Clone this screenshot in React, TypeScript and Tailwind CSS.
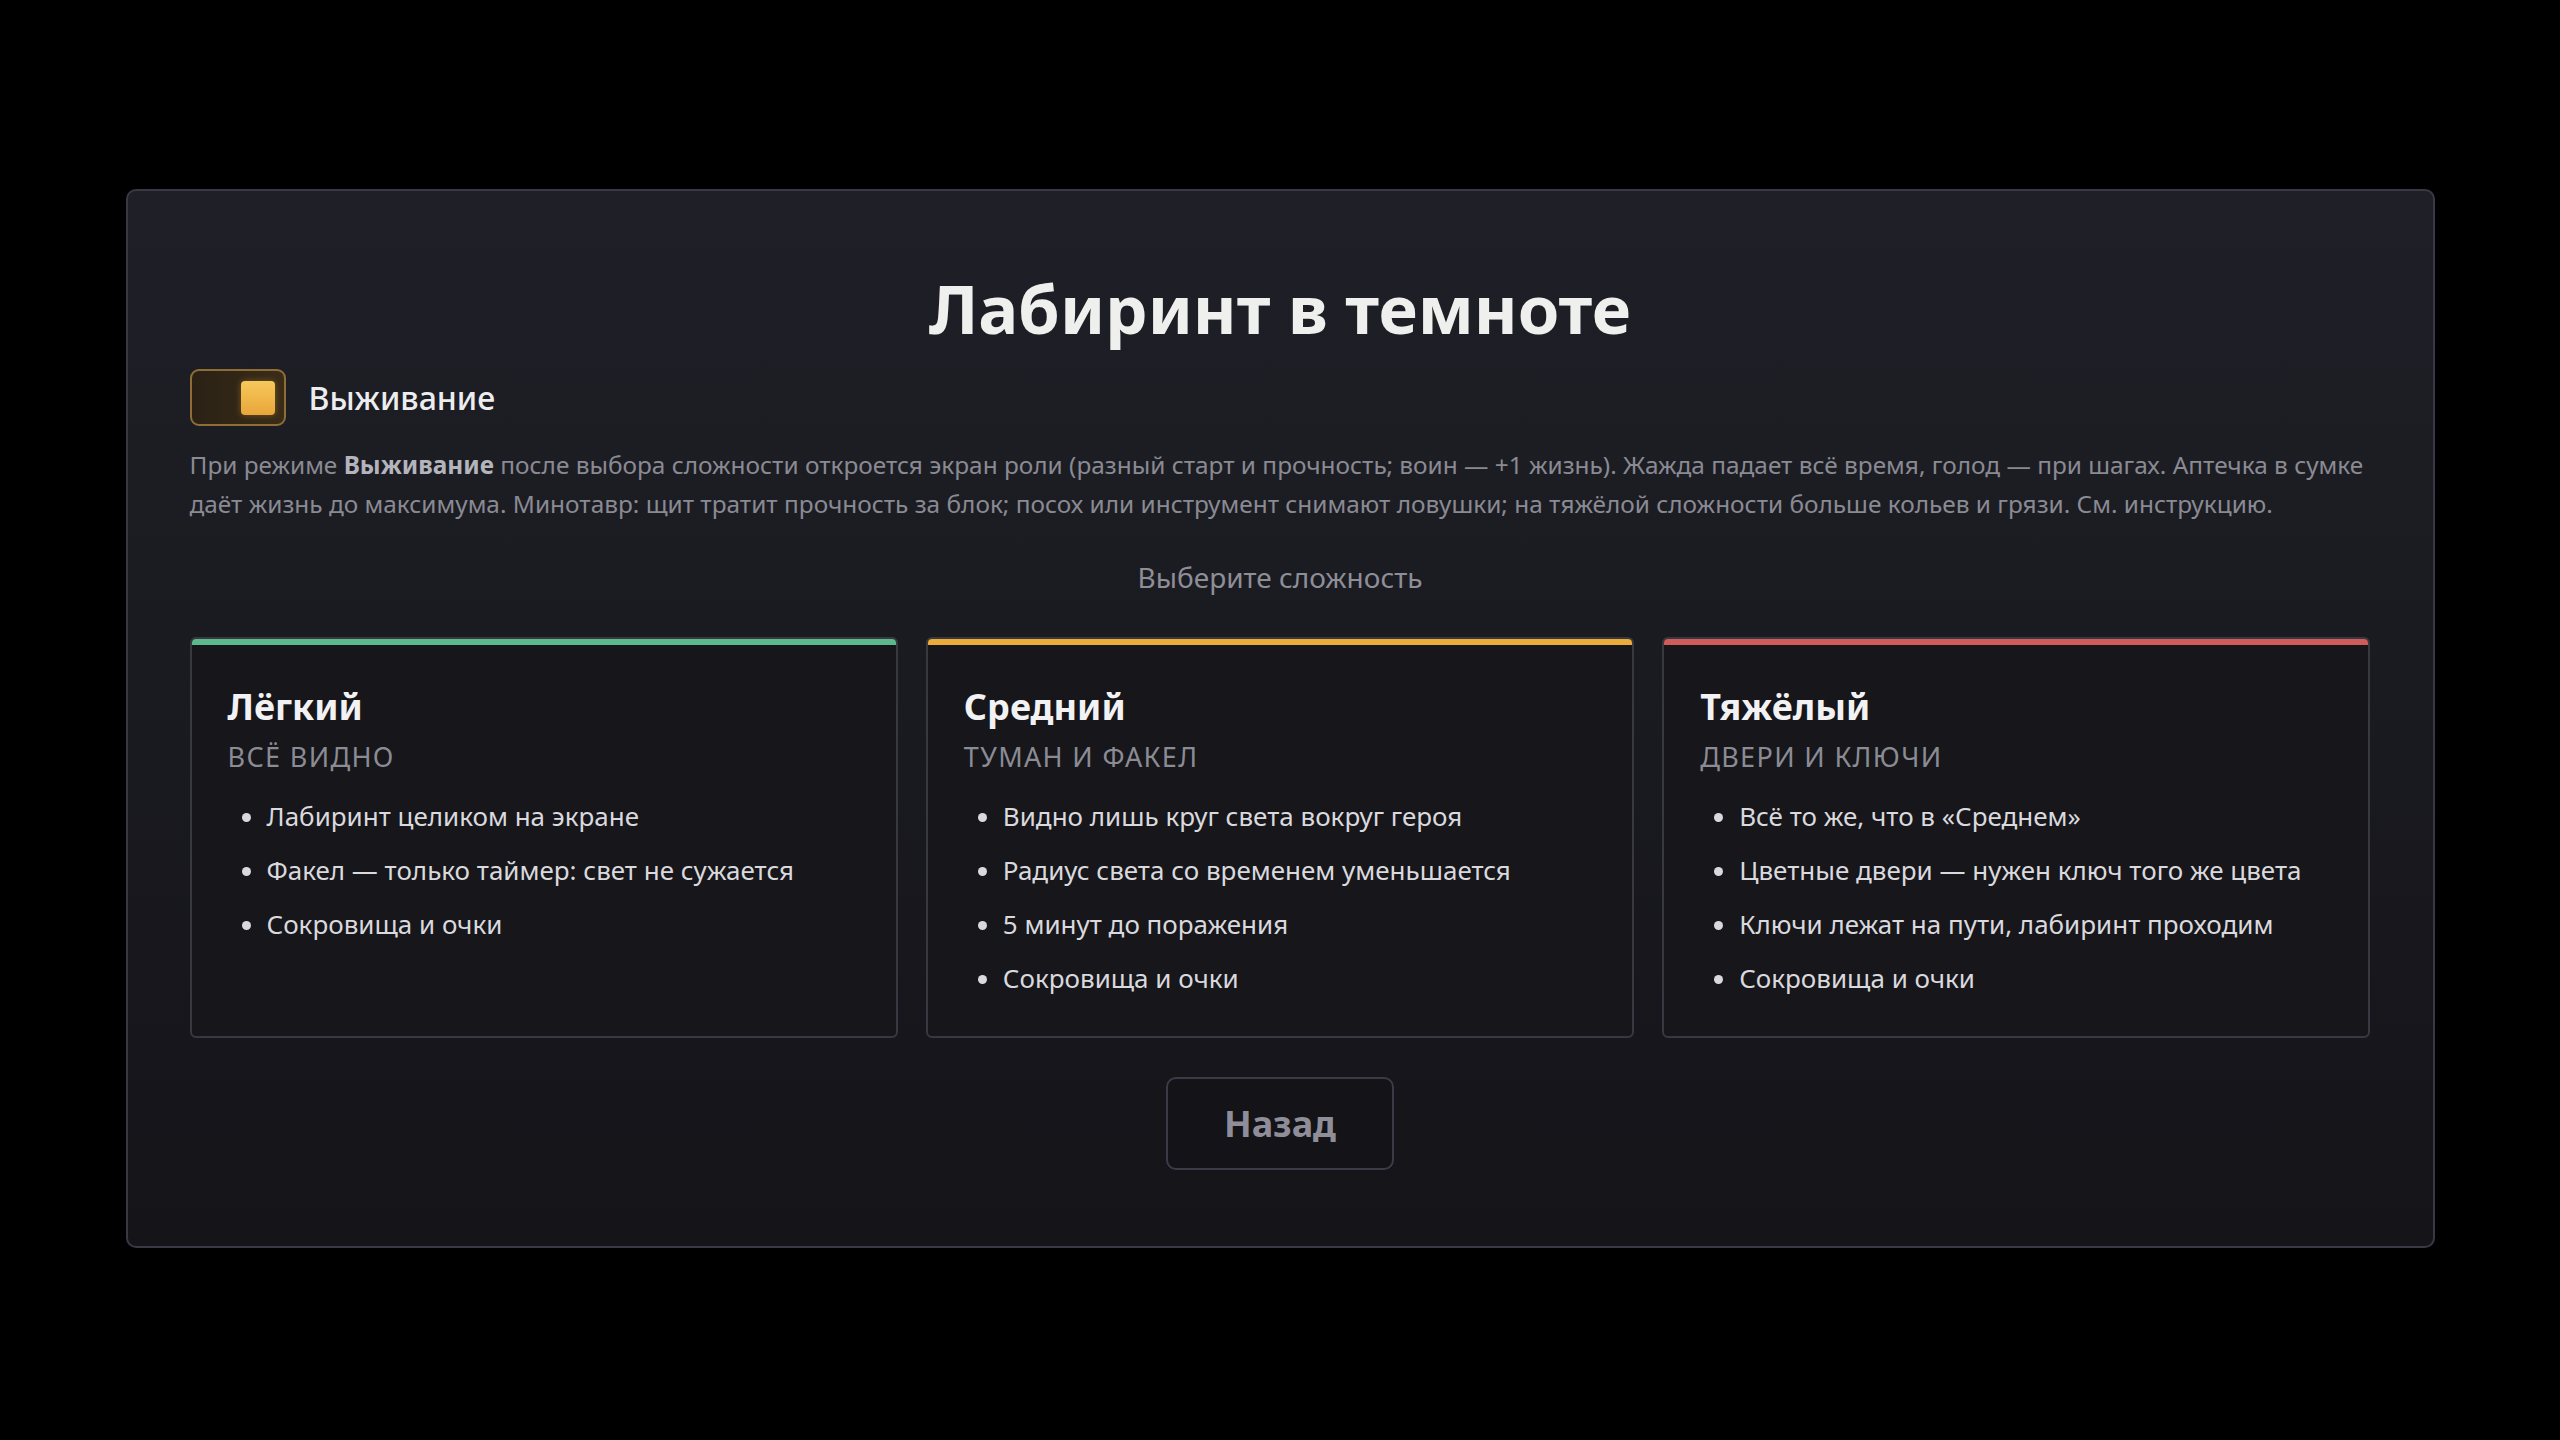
import { useState } from "react";

type Level = {
  id: string;
  title: string;
  subtitle: string;
  accent: string;
  points: string[];
};

const levels: Level[] = [
  {
    id: "easy",
    title: "Лёгкий",
    subtitle: "Всё видно",
    accent: "bg-[#5bb98b]",
    points: ["Лабиринт целиком на экране", "Факел — только таймер: свет не сужается", "Сокровища и очки"],
  },
  {
    id: "medium",
    title: "Средний",
    subtitle: "Туман и факел",
    accent: "bg-[#eaab3b]",
    points: [
      "Видно лишь круг света вокруг героя",
      "Радиус света со временем уменьшается",
      "5 минут до поражения",
      "Сокровища и очки",
    ],
  },
  {
    id: "hard",
    title: "Тяжёлый",
    subtitle: "Двери и ключи",
    accent: "bg-[#cf5b5b]",
    points: [
      "Всё то же, что в «Среднем»",
      "Цветные двери — нужен ключ того же цвета",
      "Ключи лежат на пути, лабиринт проходим",
      "Сокровища и очки",
    ],
  },
];

function SurvivalToggle({ on, onToggle }: { on: boolean; onToggle: () => void }) {
  return (
    <button type="button" onClick={onToggle} className="flex items-center gap-[23px]">
      <span
        className={`flex h-[57px] w-[96px] items-center rounded-[9px] border-2 px-[9px] ${
          on
            ? "justify-end border-[#8e6d37] bg-gradient-to-r from-[#2a2115] to-[#3a2c17]"
            : "justify-start border-[#3a3a44] bg-[#1a1a20]"
        }`}
      >
        <span
          className={`block h-[34px] w-[34px] rounded-[4px] ${
            on ? "bg-gradient-to-b from-[#f7c85a] to-[#e8a63a] shadow-[0_0_6px_rgba(240,180,70,0.35)]" : "bg-[#55555f]"
          }`}
        />
      </span>
      <span className="text-[32px] font-medium text-[#ededf0]">Выживание</span>
    </button>
  );
}

function LevelCard({ level }: { level: Level }) {
  return (
    <button
      type="button"
      className="flex flex-col overflow-hidden rounded-[6px] border-2 border-[#383842] bg-[#16161b] text-left"
    >
      <div className={`h-[6px] w-full ${level.accent}`} />
      <div className="px-[36px] pb-[38px] pt-[41px]">
        <h2 className="text-[36px] font-bold leading-[42px] text-[#f2f2f4]">{level.title}</h2>
        <div className="mt-[11px] text-[27px] uppercase leading-[36px] tracking-[0.05em] text-[#8b8b94]">
          {level.subtitle}
        </div>
        <ul className="mt-[22px] flex list-disc flex-col gap-[15px] pl-[39px] text-[26px] leading-[39px] text-[#d9d9de] marker:text-[#d9d9de]">
          {level.points.map((p) => (
            <li key={p}>{p}</li>
          ))}
        </ul>
      </div>
    </button>
  );
}

export default function App() {
  const [survival, setSurvival] = useState(true);

  return (
    <div
      className="flex min-h-screen items-start justify-center bg-black pt-[189px]"
      style={{ fontFamily: '"Noto Sans", "Open Sans", sans-serif' }}
    >
      <div className="w-[2309px] rounded-[10px] border-2 border-[#383944] bg-gradient-to-b from-[#1f2027] to-[#141419] px-[62px] pb-[76px] pt-[74px]">
        <h1 className="text-center text-[67px] font-bold leading-[86px] text-[#efefed]">Лабиринт в темноте</h1>

        <div className="mt-[18px]">
          <SurvivalToggle on={survival} onToggle={() => setSurvival((v) => !v)} />
        </div>

        <p className="mt-[19px] text-[24.4px] leading-[39px] text-[#8a8a93]">
          При режиме <b className="font-bold text-[#b4b4bc]">Выживание</b> после выбора сложности откроется экран роли
          (разный старт и прочность; воин — +1 жизнь). Жажда падает всё время, голод — при шагах. Аптечка в сумке
          даёт жизнь до максимума. Минотавр: щит тратит прочность за блок; посох или инструмент снимают ловушки; на
          тяжёлой сложности больше кольев и грязи. См. инструкцию.
        </p>

        <div className="mt-[33px] text-center text-[28px] leading-[42px] text-[#8e8e97]">Выберите сложность</div>

        <div className="mt-[39px] grid grid-cols-3 gap-[28px]">
          {levels.map((l) => (
            <LevelCard key={l.id} level={l} />
          ))}
        </div>

        <div className="mt-[39px] flex justify-center">
          <button
            type="button"
            className="h-[93px] w-[228px] rounded-[10px] border-2 border-[#3b3b47] bg-[#131318] text-[36px] font-bold text-[#8f8e98]"
          >
            Назад
          </button>
        </div>
      </div>
    </div>
  );
}
